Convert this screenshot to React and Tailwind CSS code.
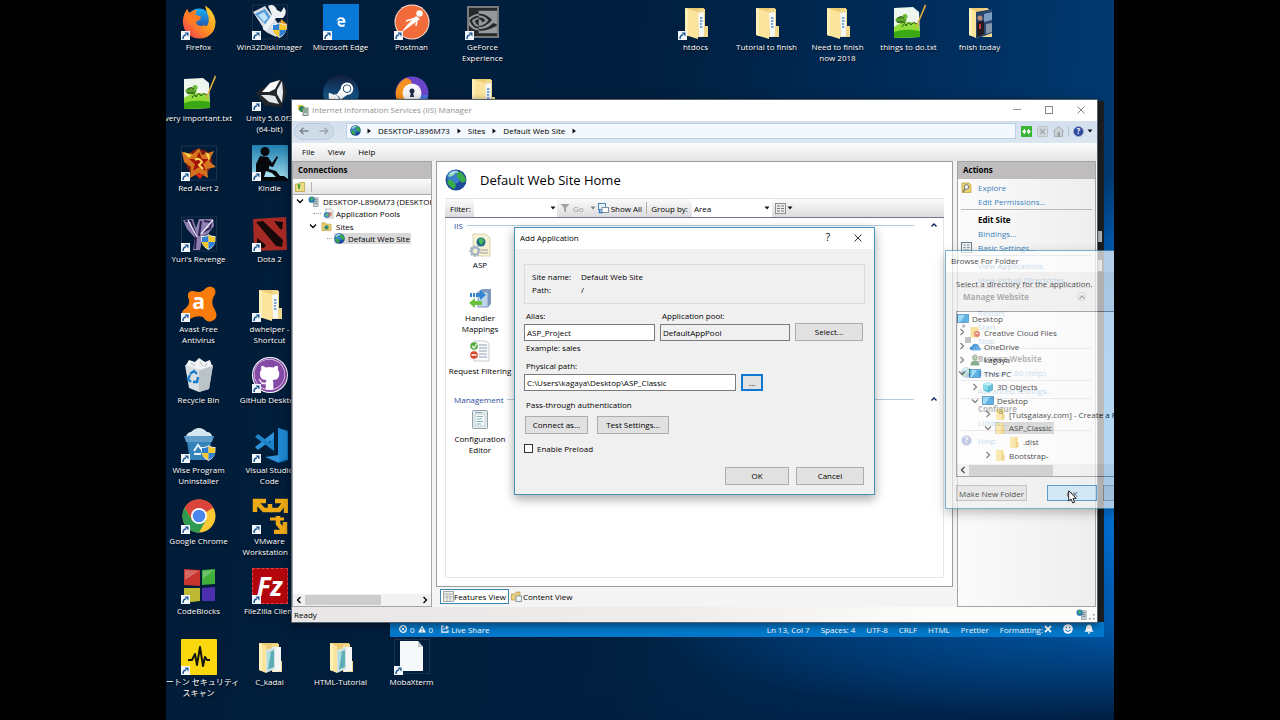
import React from "react";
import { FaGithub, FaSteamSymbol } from "react-icons/fa";
import { FaEdgeLegacy } from "react-icons/fa6";
import { SiNvidia } from "react-icons/si";

/* ---------- desktop icons (36 x 36) ---------- */

function Svg({ children, box = "0 0 36 36", className = "size-9" }) {
  return (
    <svg viewBox={box} className={className} aria-hidden="true">
      {children}
    </svg>
  );
}

const Shield = () => (
  <g>
    <path d="M20 20 q6 0 7.500 -2 q2 2 7 2 q1 10 -7 14 q-8 -4 -7.500 -14z" fill="#e8eef5" />
    <path d="M21 21 q5 0 6.500 -2 v7 h-6.500z" fill="#2f7fd4" />
    <path d="M27.500 19 q2 2 6.500 2 v5 h-6.500z" fill="#f6c72d" />
    <path d="M21 26 h6.500 v7 q-6 -3 -6.500 -7z" fill="#f6c72d" />
    <path d="M27.500 26 h6.500 q-.5 4 -6.500 7z" fill="#2f7fd4" />
  </g>
);

const Firefox = () => (
  <Svg>
    <defs>
      <linearGradient id="ffBody" x1="1" y1="0" x2="0" y2="1">
        <stop offset="0" stopColor="#ffe23c" />
        <stop offset=".45" stopColor="#ff9a1c" />
        <stop offset="1" stopColor="#ee2f55" />
      </linearGradient>
      <linearGradient id="ffGlobe" x1="0" y1="0" x2="0" y2="1">
        <stop offset="0" stopColor="#18b0f2" />
        <stop offset="1" stopColor="#2c3f9e" />
      </linearGradient>
    </defs>
    <circle cx="18" cy="16" r="11.500" fill="url(#ffGlobe)" />
    <path
      d="M24 1.500 Q33 7 34.500 17 Q35 28 26 33 Q16 37 8 31 Q1 25 2 15 Q3 9 6 5 Q7 8 9 9 Q12 6 16 6 Q14 9 14.500 11 L20 13 Q19 16 15 17.500 Q15 21 19 22 Q23 21 26 22 Q29 18 27 11 Q25 6 24 1.500z"
      fill="url(#ffBody)"
    />
    <path d="M6 5 Q7 8 9 9 Q12 6 16 6 Q14 9 14.500 11 L20 13 Q19 16 15 17.500 Q12 17 10 20 Q3 16 6 5z" fill="#ff7a22" />
  </Svg>
);

const DiskImager = () => (
  <Svg>
    <rect x=".5" y="1" width="35" height="34" fill="none" stroke="#1c3350" />
    <path d="M1 8 L13 2 L28 22 L24 33 L14 28z" fill="#d7dde2" />
    <path d="M3 10 L13 5 L21 17 L16 23z" fill="#4f9ada" />
    <path d="M6 11 L12 8 L16 14 L12 18z" fill="#bfe0fa" />
    <path d="M16 2 Q22 -1 25 6 L29 8 L32 3 Q36 9 31 14 L24 14 L14 27 Q10 26 11 23 L20 11z" fill="#eef2f4" />
    <path d="M29 15 L35 20 V26 L28 20z" fill="#e59a2c" />
    <Shield />
  </Svg>
);

const Edge = () => (
  <div className="flex size-9 items-center justify-center bg-[#0a78d7] text-[10px] text-white">
    <FaEdgeLegacy />
  </div>
);

const Postman = () => (
  <Svg>
    <circle cx="18" cy="18" r="17.500" fill="#f7e2d6" />
    <circle cx="18" cy="18" r="16.500" fill="#f26b3a" />
    <circle cx="25.500" cy="9.500" r="3.200" fill="#fff" />
    <path d="M22 12 L26 15 L15 23 L7 29 L13 21z" fill="#fff" />
    <path d="M22 14 L12 17 M23 15 L22 22" stroke="#fff" strokeWidth="1.600" fill="none" />
  </Svg>
);

const GeForce = () => (
  <div className="flex size-9 items-center justify-center">
    <div className="flex size-8 items-center justify-center overflow-hidden border-2 border-[#77797b] bg-[#26282b] text-[34px] text-[#96999b]">
      <SiNvidia className="shrink-0" />
    </div>
  </div>
);

const NotePad = () => (
  <Svg>
    <path d="M3 4 L22 3 L28 8 L29 33 L3 34z" fill="#eef6ee" />
    <path d="M3 23 Q14 15 28 20 L29 33 L3 34z" fill="#8fdc3a" />
    <path d="M3 28 Q14 24 29 27 L29 33 L3 34z" fill="#3aa812" />
    <ellipse cx="10" cy="16" rx="5.500" ry="3.500" fill="#5ba32c" />
    <circle cx="14" cy="12.500" r="2.500" fill="#6cbb35" />
    <path d="M7 14 q3 -3 6 0 M6 18 h8 M11 23 q3 -6 4 -1 q3 -6 5 -1 q2 -4 6 -1" stroke="#24501a" fill="none" />
    <path d="M34 0 L35 2 L26 23 L24 25 L25 22z" fill="#e2b03c" />
  </Svg>
);

const Unity = () => (
  <Svg>
    <path d="M9 14 L27 4 L31 6 L35 18 L29 32 L12 30 L4 18z" fill="#22262b" />
    <path d="M10 17 L18 8 L28 5 L23 14 L17 17z" fill="#fff" />
    <path d="M30 6 L31 17 L30 28 L25 19 L25 15z" fill="#e9ecee" />
    <path d="M9 20 L17 20 L23 21 L27 29 L17 27z" fill="#e3e6e8" />
  </Svg>
);

const Steam = () => (
  <div className="size-9 rounded-full bg-[linear-gradient(180deg,#111d3a,#1478b8)] p-1 text-[28px] text-white">
    <FaSteamSymbol />
  </div>
);

const Privacy = () => (
  <Svg>
    <circle cx="18" cy="18" r="16.500" fill="#6a45c9" />
    <path d="M2 22 Q0 10 12 3 Q22 6 14 14 L18 34 Q5 34 2 22z" fill="#f58f1e" />
    <path d="M34 20 Q34 32 18 34 V20z" fill="#4c78e0" />
    <circle cx="18" cy="18" r="9.500" fill="#f4f4fa" />
    <circle cx="18" cy="16" r="2.500" fill="#20304a" />
    <path d="M17 17 h2 l1 5 h-4z" fill="#20304a" />
  </Svg>
);

const Folder = ({ kind }) => (
  <Svg>
    <path d="M7 4 H26 V31 H7z" fill="#edcb74" />
    <path d="M20 5 H27 V22 H30 V33 H20z" fill="#f1d88f" />
    {kind === "pictures" ? (
      <g>
        <path d="M20 8 L29 8 V32 L21 33z" fill="#f5f5f3" />
        <path d="M14 11 L23 8 V30 L14 34z" fill="#d3e2e2" />
        <path d="M15 14 L22 11 V28 L15 31z" fill="#5cadb5" />
        <path d="M15 14 L19 12 L16 31 L15 31z" fill="#b0dde0" />
      </g>
    ) : kind === "photo" ? (
      <g>
        <path d="M14 8 L30 5 V29 L14 35z" fill="#29456c" />
        <path d="M22 10 L30 8 V16 L22 18z" fill="#7d9cc4" />
        <path d="M24 20 L30 19 V28 L24 30z" fill="#8796ab" />
        <circle cx="18" cy="14" r="2.500" fill="#b98d76" />
        <path d="M15 18 L22 17 L22 30 L15 33z" fill="#251a20" />
        <path d="M17 20 h2 v5 h-2z" fill="#c03a34" />
      </g>
    ) : (
      <g>
        <path d="M20 9 L26 8 V32 L21 33z" fill="#f7f7f5" />
        <path d="M22 14 h2.500 M22 17 h2.500 M22 20 h2 M22 23 h2.500" stroke="#4d8fd0" strokeWidth="1.600" />
      </g>
    )}
    <path d={kind ? "M7 4 L14 7 V34 L7 31z" : "M7 4 L20 8 V35 L7 31z"} fill="#fbe49c" />
    <path d="M7 4 L10 5 V32 L7 31z" fill="#fff0b8" />
  </Svg>
);

const RedAlert = () => (
  <Svg>
    <rect x=".5" y="1" width="35" height="34" fill="none" stroke="#1c3350" />
    <circle cx="18" cy="17" r="13" fill="#7c1a12" />
    <path d="M1 7 L12 9 L18 3 L21 10 L33 6 L28 16 L35 22 L26 24 L27 33 L18 28 L9 33 L10 22 L3 17z" fill="#d5731e" />
    <path d="M18 7 L21 14 L28 14 L22 19 L25 26 L18 22 L12 26 L14 19 L8 14 L15 14z" fill="#a31108" />
    <path d="M2 7 L11 10 L8 13z M24 7 q7 2 4 9" fill="#f6d24a" />
    <path d="M14 15 q4 -3 7 2 l-3 3 l4 4" stroke="#ffd95a" strokeWidth="2" fill="none" />
    <path d="M14 29 h9 l-4 5z" fill="#e52616" />
  </Svg>
);

const Kindle = () => (
  <Svg>
    <defs>
      <linearGradient id="kindleSky" x1="0" y1="0" x2="0" y2="1">
        <stop offset="0" stopColor="#1f7fb0" />
        <stop offset="1" stopColor="#a6e0f0" />
      </linearGradient>
    </defs>
    <rect width="36" height="36" rx="1" fill="url(#kindleSky)" />
    <circle cx="13" cy="6.500" r="4.500" fill="#05080c" />
    <path d="M8 11 L16 12 L20 18 L25 11 L26 12 L21 22 L17 21 L17 24 L24 26 L28 31 H32 L36 34 V36 H1 L4 33 H7 L4 27 L4 19z" fill="#05080c" />
    <path d="M14 26 L20 28 L24 32 H12z" fill="#a6e0f0" />
  </Svg>
);

const Yuri = () => (
  <Svg>
    <rect x=".5" y="1" width="35" height="34" fill="none" stroke="#1c3350" />
    <path d="M2 4 L12 3 L15 12 L18 3 H32 L33 10 L27 18 L22 20 L19 34 H12 L14 22 L6 13z" fill="#8d80b0" />
    <path d="M4 5 L10 5 L15 20 L14 33 M20 5 L18 20 M23 5 L30 6 L29 12 L22 16" stroke="#2d2152" strokeWidth="2" fill="none" />
    <path d="M7 4 L16 21 M32 4 L20 18" stroke="#ece8f7" strokeWidth="1.300" fill="none" />
    <Shield />
  </Svg>
);

const Dota = () => (
  <Svg>
    <path d="M1 3 L34 1 L35 34 L2 35z" fill="#a82a25" />
    <path d="M4 6 L11 5 L31 24 L30 31 L24 30z M22 5 L31 6 L30 14 L27 12z M5 22 L14 29 L12 32 L5 31z" fill="#17090a" />
  </Svg>
);

const Avast = () => (
  <div className="relative size-9">
    <Svg>
      <path d="M25 2 Q29 -1 33 2 Q36 6 33 10 Q29 17 34 24 Q38 32 31 35 Q26 37 22 31 Q15 29 9 33 Q3 35 1 29 Q0 25 5 22 Q10 18 7 11 Q6 4 13 5 Q20 8 25 2z" fill="#f97b0c" />
    </Svg>
    <span className="absolute inset-0 text-center text-[21px] leading-[30px] font-bold text-white">a</span>
  </div>
);

const RecycleBin = () => (
  <Svg>
    <path d="M4 8 L32 8 L28 32 L18 35 L8 31z" fill="#d9dfe2" />
    <path d="M18 11 L32 8 L28 32 L18 35z" fill="#b9c3c8" />
    <path d="M5 8 L8 3 L14 5 L18 1 L24 5 L29 3 L31 9 L19 13z" fill="#f2f4f5" />
    <path d="M10 6 l4 3 M19 5 l3 4 M26 6 l-2 4" stroke="#aab4ba" />
    <path d="M9 17 l4 -3 l3 3 M17 20 l-1 5 l-4 0 M10 25 l-3 -3 l2 -4" stroke="#1a7cc8" strokeWidth="2.400" fill="none" />
  </Svg>
);

const GitHubIcon = () => (
  <div className="flex size-9 items-center justify-center rounded-full bg-white p-px">
    <div className="flex size-full items-center justify-center rounded-full bg-[#8549a6]">
      <div className="rounded-full bg-white text-[31px] text-[#8549a6]">
        <FaGithub />
      </div>
    </div>
  </div>
);

const Wise = () => (
  <Svg>
    <path d="M3 9 H33 L31 15 H5z" fill="#5f9cc9" />
    <path d="M5 9 Q7 5 10 5 Q18 -3 26 5 Q30 5 31 9z" fill="#d7e7f2" />
    <path d="M6 15 H30 L28 33 H9z" fill="#3583b8" />
    <path d="M13 24 l4 -6 l4 5 M20 27 h-7" stroke="#e8f3fa" strokeWidth="2" fill="none" />
    <Shield />
  </Svg>
);

const VsCode = () => (
  <Svg>
    <path d="M26 1 L36 4 V33 L26 36z" fill="#1173bd" />
    <path d="M26 1 L35 4 V31 L26 35z" fill="#1f86cf" />
    <path d="M22 5 V23 L18 20 V12z" fill="#1d84cc" />
    <path d="M22 5 L3 20 L6 23 L22 11z" fill="#2e93da" />
    <path d="M3 10 L6 7 L22 19 V24z" fill="#1d84cc" />
    <path d="M13 30 L27 28 V36z" fill="#2e93da" />
  </Svg>
);

const Chrome = () => (
  <Svg>
    <circle cx="18" cy="18" r="16.500" fill="#fcc934" />
    <path d="M18 18 L3.700 9.800 A16.500 16.500 0 0 1 32.300 9.800z" fill="#d9453a" />
    <path d="M18 10 H32.500 L32.300 9.800 A16.500 16.500 0 0 0 3.700 9.800 L11 22z" fill="#d9453a" />
    <path d="M3.700 9.800 A16.500 16.500 0 0 0 18 34.500 L25 22 L18 26 L11 22z" fill="#2f9b50" />
    <circle cx="18" cy="18" r="8" fill="#fff" />
    <circle cx="18" cy="18" r="6.300" fill="#4a86ee" />
  </Svg>
);

const Vmware = () => (
  <Svg>
    <g fill="none" stroke="#edaa15" strokeWidth="4.500">
      <path d="M3 14 V3 H14 M4 4 L12 12 H18 V6" />
      <path d="M23 3 H34 V15 M33 4 L27 12 H19" />
      <path d="M33 24 V34 H22 M33 34 L26 26 V18" />
      <path d="M18 21 H32" strokeWidth="3" />
    </g>
  </Svg>
);

const CodeBlocks = () => (
  <Svg>
    <path d="M3 1 L19 2 V18 L3 17z" fill="#c8342f" />
    <path d="M21 2 L34 1 V16 L21 17z" fill="#3fae3a" />
    <path d="M3 20 L19 20 V33 L3 35z" fill="#bdb933" />
    <path d="M21 20 L34 19 V33 L21 33z" fill="#4b2fae" />
    <path d="M4 2 L18 3 L4 12z M22 3 L33 2 L22 11z" fill="#fff" opacity=".25" />
  </Svg>
);

const FileZilla = () => (
  <div className="flex size-9 items-center justify-center border border-dashed border-[#d9474a] bg-[#b3060c] text-[26px] leading-none font-bold text-white italic">
    Fz
  </div>
);

const Norton = () => (
  <Svg>
    <rect width="36" height="36" rx="1" fill="#fbd80d" />
    <path d="M7 21 L11 21 L14 15 L16 26 L19 8 L22 27 L24 18 L26 21 H29" stroke="#15160f" strokeWidth="2" fill="none" strokeLinejoin="round" />
  </Svg>
);

const BlankFile = () => (
  <Svg>
    <rect x=".5" y=".5" width="35" height="34" fill="none" stroke="#1c3350" />
    <path d="M6 2 H24 L29 8 V32 H6z" fill="#f6f8f9" />
    <path d="M24 2 V8 H29z" fill="#c3ccd2" />
  </Svg>
);

const ShortcutArrow = () => (
  <svg viewBox="0 0 9 9" className="absolute bottom-0 left-0 size-[9px]" aria-hidden="true">
    <rect width="9" height="9" fill="#f4f7fa" />
    <path d="M2 8 Q2 4 5 4" stroke="#1c5794" strokeWidth="1.500" fill="none" />
    <path d="M3.500 1.500 H7.500 V5.500z" fill="#1c5794" />
  </svg>
);

const desktopItems = [
  { at: "col-start-1 row-start-1", label: "Firefox", icon: <Firefox />, link: true },
  { at: "col-start-2 row-start-1", label: "Win32DiskImager", icon: <DiskImager />, link: true },
  { at: "col-start-3 row-start-1", label: "Microsoft Edge", icon: <Edge />, link: true },
  { at: "col-start-4 row-start-1", label: "Postman", icon: <Postman />, link: true },
  { at: "col-start-5 row-start-1", label: "GeForce\nExperience", icon: <GeForce />, link: true },
  { at: "col-start-8 row-start-1", label: "htdocs", icon: <Folder />, link: true },
  { at: "col-start-9 row-start-1", label: "Tutorial to finish", icon: <Folder /> },
  { at: "col-start-10 row-start-1", label: "Need to finish\nnow 2018", icon: <Folder /> },
  { at: "col-start-11 row-start-1", label: "things to do.txt", icon: <NotePad /> },
  { at: "col-start-12 row-start-1", label: "fnish today", icon: <Folder kind="photo" /> },
  { at: "col-start-1 row-start-2", label: "very important.txt", icon: <NotePad /> },
  { at: "col-start-2 row-start-2", label: "Unity 5.6.0f3\n(64-bit)", icon: <Unity />, link: true },
  { at: "col-start-3 row-start-2", label: "", icon: <Steam /> },
  { at: "col-start-4 row-start-2", label: "", icon: <Privacy /> },
  { at: "col-start-5 row-start-2", label: "", icon: <Folder /> },
  { at: "col-start-1 row-start-3", label: "Red Alert 2", icon: <RedAlert />, link: true },
  { at: "col-start-2 row-start-3", label: "Kindle", icon: <Kindle />, link: true },
  { at: "col-start-1 row-start-4", label: "Yuri's Revenge", icon: <Yuri />, link: true },
  { at: "col-start-2 row-start-4", label: "Dota 2", icon: <Dota />, link: true },
  { at: "col-start-1 row-start-5", label: "Avast Free\nAntivirus", icon: <Avast />, link: true },
  { at: "col-start-2 row-start-5", label: "dwhelper -\nShortcut", icon: <Folder />, link: true },
  { at: "col-start-1 row-start-6", label: "Recycle Bin", icon: <RecycleBin /> },
  { at: "col-start-2 row-start-6", label: "GitHub Desktop", icon: <GitHubIcon />, link: true },
  { at: "col-start-1 row-start-7", label: "Wise Program\nUninstaller", icon: <Wise />, link: true },
  { at: "col-start-2 row-start-7", label: "Visual Studio\nCode", icon: <VsCode />, link: true },
  { at: "col-start-1 row-start-8", label: "Google Chrome", icon: <Chrome />, link: true },
  { at: "col-start-2 row-start-8", label: "VMware\nWorkstation ...", icon: <Vmware />, link: true },
  { at: "col-start-1 row-start-9", label: "CodeBlocks", icon: <CodeBlocks />, link: true },
  { at: "col-start-2 row-start-9", label: "FileZilla Client", icon: <FileZilla />, link: true },
  { at: "col-start-1 row-start-10", label: "ノートン セキュリティ\nスキャン", icon: <Norton />, link: true },
  { at: "col-start-2 row-start-10", label: "C_kadai", icon: <Folder kind="pictures" /> },
  { at: "col-start-3 row-start-10", label: "HTML-Tutorial", icon: <Folder kind="pictures" /> },
  { at: "col-start-4 row-start-10", label: "MobaXterm", icon: <BlankFile />, link: true },
];

function DesktopIcons() {
  return (
    <ul className="-ml-[3px] grid h-[709px] grid-cols-[repeat(13,71px)] grid-rows-10 pt-1">
      {desktopItems.map((item) => (
        <li key={item.at} className={"flex flex-col items-center gap-px " + item.at}>
          <span className="relative">
            {item.icon}
            {item.link && <ShortcutArrow />}
          </span>
          <span className="text-center leading-[11px] whitespace-pre text-white [text-shadow:0_1px_2px_#000]">
            {item.label}
          </span>
        </li>
      ))}
    </ul>
  );
}

/* ---------- small icons ---------- */

const Globe = ({ className = "size-[11px]" }) => (
  <Svg box="0 0 22 22" className={className}>
    <circle cx="11" cy="11" r="10.500" fill="#1c4b9c" />
    <circle cx="9" cy="8" r="7" fill="#4a96de" opacity=".7" />
    <path d="M2 13 Q3 10 6 11 L10 14 L11 17 L9 20 Q4 18 2 13z M12 3 L16 3 L20 8 L21 12 L17 14 L14 10 L12 8z" fill="#37ab45" />
    <path d="M3 7 Q6 2 11 3 L9 6 L5 8z" fill="#8fd8b5" />
    <path d="M5 5 Q8 2 13 3" stroke="#dff2ff" strokeWidth="1.500" fill="none" opacity=".8" />
  </Svg>
);

const ServerIcon = () => (
  <Svg box="0 0 12 12" className="size-[11px] shrink-0">
    <rect x="6" y="2" width="5" height="9.500" fill="#c9d2d6" stroke="#7f8c92" strokeWidth=".7" />
    <path d="M7 4 h3 M7 6 h3 M7 8 h3" stroke="#54636a" strokeWidth=".8" />
    <circle cx="4" cy="4" r="3.400" fill="#2b77bd" />
    <path d="M2 3 l2 -2 l2 2 l-2 3z" fill="#47b359" />
  </Svg>
);

const ManagerIcon = () => (
  <Svg box="0 0 12 12" className="size-3 shrink-0">
    <path d="M1 1 h5 v5 h-5z" fill="#e4bd3f" />
    <circle cx="5" cy="5" r="3" fill="#2f8a57" />
    <rect x="6" y="4" width="5" height="7.500" fill="#cfd7cf" stroke="#5d6f66" strokeWidth=".8" />
    <path d="M7 6 h3 M7 8 h3" stroke="#3b7a52" />
  </Svg>
);

const PoolIcon = () => (
  <Svg box="0 0 12 12" className="size-[11px] shrink-0">
    <path d="M3 1 h6 l2 2 v8 h-8z" fill="#f3f4f5" stroke="#9aa4aa" strokeWidth=".7" />
    <circle cx="4" cy="7.500" r="3.200" fill="#3e8ec4" />
    <path d="M6 4 l4 1 l-1 4 l-3 1z" fill="#c2584e" opacity=".7" />
    <path d="M3 6 l2 0 l1 3 l-3 0z" fill="#64bf6b" />
  </Svg>
);

const SitesIcon = () => (
  <Svg box="0 0 12 12" className="size-[11px] shrink-0">
    <path d="M1 2 h4 l1 1.500 h5 v7 h-10z" fill="#e9cf6e" stroke="#b3953a" strokeWidth=".6" />
    <circle cx="6" cy="7" r="2.400" fill="#3a8a78" />
  </Svg>
);

const SmallFolder = () => (
  <Svg box="0 0 11 12" className="h-3 w-[11px] shrink-0">
    <path d="M1.500 1 h7 v10.500 h-7z" fill="#f3cf62" />
    <path d="M1.500 1 h5 v10.500 h-5z" fill="#fbe291" />
    <path d="M7 6 h2.500 v5.500 h-2.500z" fill="#eec65a" />
  </Svg>
);

const MonitorIcon = () => (
  <Svg box="0 0 12 11" className="h-[11px] w-3 shrink-0">
    <rect x=".5" y="1.500" width="11" height="8" fill="#2296dd" stroke="#1467a5" strokeWidth=".8" />
    <path d="M1 2 h7 l-5 7 h-2z" fill="#7fd0f8" />
  </Svg>
);

const CloudIcon = () => (
  <Svg box="0 0 12 11" className="h-[11px] w-3 shrink-0">
    <path d="M1 8.500 Q0 5.500 3 5 Q4 2 7 3 Q10 3 10 6 Q12 6.500 11.500 9 H2z" fill="#1374c9" />
    <path d="M3 9.500 Q3 6.500 6 6.500 Q8 4.500 10 6.500 Q12 7 11.500 9.500z" fill="#3a9be8" />
  </Svg>
);

const CcIcon = () => (
  <Svg box="0 0 12 12" className="size-3 shrink-0">
    <path d="M1.500 1 h8 v10.500 h-8z" fill="#f6d876" />
    <circle cx="8" cy="8" r="3" fill="#dd5139" />
    <path d="M6.500 8 q1.500 -2 3 0" stroke="#fff" fill="none" />
  </Svg>
);

const UserIcon = () => (
  <Svg box="0 0 12 12" className="size-3 shrink-0">
    <circle cx="6" cy="3.500" r="2.600" fill="#9bbf9a" stroke="#587558" strokeWidth=".6" />
    <path d="M1.500 11.500 q0 -5 4.500 -5 q4.500 0 4.500 5z" fill="#5e8f64" />
  </Svg>
);

const CubeIcon = () => (
  <Svg box="0 0 12 12" className="size-3 shrink-0">
    <path d="M1 3 l5 -2 l5 2 v6 l-5 2.500 l-5 -2.500z" fill="#2aa5c4" />
    <path d="M1 3 l5 2 v6.500 l-5 -2.500z" fill="#5ed0e6" />
    <path d="M1 3 l5 -2 l5 2 l-5 2z" fill="#a6ecf6" />
  </Svg>
);

const chevronPaths = {
  down: "M1 2.500 L4 5.500 L7 2.500",
  up: "M1.500 5.500 L4 3 L6.500 5.500",
  left: "M5.500 1 L2.500 4 L5.500 7",
  right: "M2.500 1 L5.500 4 L2.500 7",
};

const Chevron = ({ dir = "down", className = "" }) => (
  <Svg box="0 0 8 8" className={"size-2 shrink-0 " + className}>
    <path d={chevronPaths[dir]} fill="none" stroke="currentColor" strokeWidth="1.300" />
  </Svg>
);

const Triangle = ({ right }) => (
  <Svg box="0 0 6 6" className="size-[6px] shrink-0">
    <path d={right ? "M1.500 0.500 L5 3 L1.500 5.500z" : "M0.500 1.500 H5.500 L3 4.500z"} fill="#111" />
  </Svg>
);

const Cross = ({ className }) => (
  <Svg box="0 0 8 8" className={"size-2 " + className}>
    <path d="M.5 .5 L7.500 7.500 M7.500 .5 L.5 7.500" stroke="currentColor" strokeWidth=".9" />
  </Svg>
);

const HelpIcon = () => (
  <span className="flex size-[11px] shrink-0 items-center justify-center rounded-full border border-[#9fa9cf] bg-[#2a48a0] text-[8px] leading-none font-bold text-white">
    ?
  </span>
);

/* ---------- editor behind the main window ---------- */

function EditorWindow() {
  return (
    <section
      aria-label="Code editor"
      className="absolute top-[101px] left-[224px] flex h-[536px] w-[714px] flex-col bg-[#1e2023]"
    >
      <div className="flex flex-1 flex-col items-end gap-[18px] pt-[130px] pr-0.5">
        <span className="h-[11px] w-1 bg-[#c4c8cc]" />
        <span className="h-[11px] w-1 bg-[#c4c8cc]" />
      </div>
      <footer className="flex h-[15px] items-center justify-between bg-[#0479cb] pr-[10px] pb-px pl-[9px] text-white">
        <div className="flex items-center gap-2">
          <span className="flex items-center gap-[3px]">
            <Svg box="0 0 8 8" className="size-2">
              <circle cx="4" cy="4" r="3.300" fill="none" stroke="#fff" strokeWidth="1.200" />
              <path d="M2.500 2.500 L5.500 5.500 M5.500 2.500 L2.500 5.500" stroke="#fff" />
            </Svg>
            0
            <Svg box="0 0 8 8" className="size-2">
              <path d="M4 .5 L8 7.500 H0z" fill="#fff" />
              <path d="M4 3 V5 M4 5.800 V6.800" stroke="#0479cb" />
            </Svg>
            0
          </span>
          <span className="flex items-center gap-0.5">
            <Svg box="0 0 8 8" className="size-2">
              <path d="M3 1 H.8 V7.200 H7 V5" fill="none" stroke="#fff" strokeWidth="1.200" />
              <path d="M2.500 5 Q3 2.500 5.500 2.500" fill="none" stroke="#fff" />
              <path d="M5 .3 L8 2.500 L5 4.700z" fill="#fff" />
            </Svg>
            Live Share
          </span>
        </div>
        <div className="flex items-center gap-[11px]">
          <span>Ln 13, Col 7</span>
          <span>Spaces: 4</span>
          <span>UTF-8</span>
          <span>CRLF</span>
          <span>HTML</span>
          <span>Prettier</span>
          <span className="flex items-center gap-px">
            Formatting:
            <Svg box="0 0 8 8" className="size-2">
              <path d="M1 1 L7 7 M7 1 L1 7" stroke="#fff" strokeWidth="1.800" />
            </Svg>
          </span>
          <Svg box="0 0 10 10" className="size-[10px]">
            <circle cx="5" cy="5" r="4.800" fill="#fff" />
            <path d="M3.300 2.800 v1.500 M6.700 2.800 v1.500 M2.300 6 Q5 9 7.700 6" stroke="#0479cb" fill="none" />
          </Svg>
          <Svg box="0 0 10 10" className="size-[10px]">
            <path d="M5 .5 Q8 1 8 4.500 Q8 6.500 9.500 7.800 H.5 Q2 6.500 2 4.500 Q2 1 5 .5z M4 8.300 h2 v1.200 h-2z" fill="#fff" />
          </Svg>
        </div>
      </footer>
    </section>
  );
}

/* ---------- IIS Manager ---------- */

function TitleBar() {
  return (
    <header className="flex h-[21px] items-center justify-between bg-white pr-3 pb-0.5 pl-[5px] text-[#8f8f8f]">
      <h1 className="flex items-center gap-[3px]">
        <ManagerIcon />
        Internet Information Services (IIS) Manager
      </h1>
      <div className="flex items-center gap-6">
        <button type="button" aria-label="Minimize" className="flex size-2 items-center">
          <span className="h-px w-full bg-[#999]" />
        </button>
        <button type="button" aria-label="Maximize" className="size-2 border border-[#888]" />
        <button type="button" aria-label="Close">
          <Cross className="text-[#777]" />
        </button>
      </div>
    </header>
  );
}

function AddressBar() {
  return (
    <nav aria-label="Address" className="flex h-[22px] items-center gap-[5px] bg-[linear-gradient(180deg,#d3dfed,#dbe6f1)] pr-1 pb-0.5 pl-0.5">
      <div className="flex h-[17px] w-10 items-center justify-between rounded-full border border-[#bccbdb] bg-[#cfdbe8] px-1 text-[#78828e]">
        {["Back", "Forward"].map((name) => (
          <button key={name} type="button" aria-label={name}>
            <Svg box="0 0 10 8" className={"h-2 w-[10px] " + (name === "Forward" ? "rotate-180 opacity-60" : "")}>
              <path d="M4.500 .7 L1.200 4 L4.500 7.300 M1.200 4 H9.500" stroke="currentColor" strokeWidth="1.400" fill="none" />
            </Svg>
          </button>
        ))}
      </div>
      <ol className="ml-[7px] flex h-4 flex-1 items-center gap-[6px] border border-[#bcd0e4] bg-[#f2f8fd] px-[3px] pb-px">
        <li className="-mr-px">
          <Globe />
        </li>
        {["DESKTOP-L896M73", "Sites", "Default Web Site"].map((part) => (
          <li key={part} className="flex items-center gap-[6px]">
            <Triangle right />
            <a href="#">{part}</a>
          </li>
        ))}
        <li>
          <Triangle right />
        </li>
      </ol>
      <div className="flex items-center gap-[5px]">
        <button type="button" aria-label="Refresh">
          <Svg box="0 0 11 11" className="size-[11px]">
            <rect width="11" height="11" rx="1" fill="#38b532" />
            <path d="M1 5.500 L4 2.500 V4.500 H7 V2.500 L10 5.500 L7 8.500 V6.500 H4 V8.500z" fill="#fff" />
            <path d="M5.500 3.500 v4" stroke="#38b532" />
          </Svg>
        </button>
        <button type="button" aria-label="Stop">
          <Svg box="0 0 11 11" className="size-[11px]">
            <rect x=".5" y=".5" width="10" height="10" rx="1" fill="#d3d8dc" stroke="#bcc3c9" />
            <path d="M3 3 L8 8 M8 3 L3 8" stroke="#a2a9af" strokeWidth="1.400" />
          </Svg>
        </button>
        <button type="button" aria-label="Home">
          <Svg box="0 0 11 11" className="size-[11px]">
            <path d="M.5 5 L5.500 .5 L10.500 5 H9.500 V10.500 H1.500 V5z" fill="#cfd3d6" stroke="#9ba2a8" strokeWidth=".8" />
            <rect x="4.500" y="6" width="2.500" height="4.500" fill="#989fa5" />
          </Svg>
        </button>
        <span className="-mx-px h-[10px] w-px bg-[#b3c2d1]" />
        <button type="button" aria-label="Help" className="flex items-center gap-[3px]">
          <HelpIcon />
          <Triangle />
        </button>
      </div>
    </nav>
  );
}

const paneHead = "flex h-[17px] shrink-0 items-center bg-[#bebcbd] px-[5px] pb-0.5 font-bold";

function Connections() {
  return (
    <aside className="flex w-[140px] flex-col overflow-hidden border border-[#a5a5a5] bg-white">
      <h2 className={paneHead}>Connections</h2>
      <div className="flex h-[16px] shrink-0 items-center gap-[6px] border-b border-[#a9a9a9] bg-[linear-gradient(180deg,#fbfbfb,#e2e2e2)] px-0.5">
        <button type="button" aria-label="Connect">
          <Svg box="0 0 10 11" className="h-[11px] w-[10px]">
            <path d="M.5 3 H4 L5 1.500 H9.500 V10.500 H.5z" fill="#eedd80" stroke="#b9a44a" strokeWidth=".8" />
            <path d="M3 8 V5 H2 L4 2.500 L6 5 H5 V8z" fill="#4ea63b" />
          </Svg>
        </button>
        <span className="h-[10px] w-px bg-[#b5b5b5]" />
      </div>
      <ul className="grid h-[50px] auto-rows-fr whitespace-nowrap">
        <li className="flex items-center gap-1 pl-[3px]">
          <Chevron />
          <ServerIcon />
          DESKTOP-L896M73 (DESKTOP
        </li>
        <li className="flex items-center gap-0.5 pl-5">
          <span className="w-2 border-t border-dotted border-[#999]" />
          <PoolIcon />
          Application Pools
        </li>
        <li className="flex items-center gap-1 pl-4">
          <Chevron />
          <SitesIcon />
          Sites
        </li>
        <li className="flex items-center gap-0.5 pl-[34px]">
          <span className="w-[5px] border-t border-dotted border-[#999]" />
          <span className="flex items-center gap-[3px] bg-[#d9d9d9] pr-px">
            <Globe />
            Default Web Site
          </span>
        </li>
      </ul>
      <div className="mt-auto flex h-3 items-center justify-between bg-[#f1f1f1] px-0.5">
        <Chevron dir="left" />
        <span className="mr-auto ml-0.5 h-[10px] w-[76px] bg-[#cdcdcd]" />
        <Chevron dir="right" />
      </div>
    </aside>
  );
}

const AspIcon = () => (
  <Svg box="0 0 24 24" className="size-6">
    <path d="M5 1 H18 L22 5 V23 H5z" fill="#f6f1d4" stroke="#d2cba5" strokeWidth=".8" />
    <circle cx="13" cy="9" r="4.500" fill="#1e6e86" />
    <path d="M10 7 l4 -2 l2 3 l-3 4z" fill="#4cb85c" />
    <path d="M13 17 H20 M13 20 H20" stroke="#9a9a8c" />
    <circle cx="7" cy="18" r="3.500" fill="none" stroke="#9fb1c4" strokeWidth="2" />
    <circle cx="7" cy="18" r="5" fill="none" stroke="#9fb1c4" strokeWidth="1.500" strokeDasharray="2 1.500" />
  </Svg>
);

const HandlerIcon = () => (
  <Svg box="0 0 24 24" className="size-6">
    <path d="M11 5 L14 3 H23 V18 L20 21 H11z" fill="#7f9cc0" />
    <rect x="10" y="6" width="10" height="15" fill="#bed4ea" stroke="#6c8db3" strokeWidth=".8" />
    <path d="M2 7 h2 v4 h-2z M5 7 h2 v4 h-2z M8 7 H12 V4 L18 9 L12 14 V11 H8z" fill="#2f85d0" />
    <path d="M14 15 H7 V12 L1 17 L7 22 V19 H14z" fill="#6cc43e" />
  </Svg>
);

const FilterIcon = () => (
  <Svg box="0 0 24 24" className="size-6">
    <path d="M6 2 H18 L21 5 V22 H6z" fill="#fafafa" stroke="#b9c0c6" strokeWidth=".8" />
    <path d="M11 6 H19 M11 9 H19 M11 12 H19 M11 15 H19 M11 18 H19" stroke="#90a4bb" />
    <circle cx="6" cy="7" r="3.800" fill="#52ab3f" />
    <path d="M4 7 L6 9 L8.500 5" stroke="#fff" strokeWidth="1.200" fill="none" />
    <circle cx="6" cy="16" r="3.800" fill="#d8472c" />
    <path d="M3.500 16 H8.500" stroke="#fff" strokeWidth="1.500" />
  </Svg>
);

const ConfigIcon = () => (
  <Svg box="0 0 24 24" className="size-6">
    <rect x="4.500" y="3.500" width="15" height="18" rx="1" fill="#e7ecef" stroke="#93a1aa" />
    <rect x="7" y="7" width="10" height="12" fill="#f7fbfc" stroke="#b4c2c9" strokeWidth=".7" />
    <path d="M7 5.500 H14 M8.500 9.500 H15 M8.500 12 H14 M8.500 14.500 H15 M8.500 17 H13" stroke="#86b1b7" />
  </Svg>
);

function FeatureGroup({ title, items }) {
  return (
    <section>
      <h3 className="flex h-[14px] items-center gap-1 pr-[5px] pl-2 text-[#2b4a96]">
        {title}
        <span className="mr-3 h-px flex-1 bg-[#b4cbdc]" />
        <Chevron dir="up" className="text-[#0c1d5c]" />
      </h3>
      <ul className="grid auto-rows-[53px] grid-cols-[68px] pt-px">
        {items.map(([label, icon]) => (
          <li key={label} className="flex flex-col items-center gap-0.5 text-center leading-[11px] whitespace-pre">
            {icon}
            {label}
          </li>
        ))}
      </ul>
    </section>
  );
}

function Center() {
  return (
    <main className="flex flex-1 flex-col">
      <div className="flex flex-1 flex-col border border-[#9d9d9d] bg-white px-2 pb-2">
        <h2 className="flex h-9 items-center gap-[13px] text-[13px]">
          <Globe className="size-[22px]" />
          Default Web Site Home
        </h2>
        <div className="flex h-5 items-center border-t border-b border-t-[#e3e3e3] border-b-[#74748a] bg-[linear-gradient(180deg,#fbfbfb,#dcdcde)]">
          <label htmlFor="filter" className="w-[29px] pl-[5px]">
            Filter:
          </label>
          <span className="flex h-full w-[83px] items-center bg-white pr-px">
            <input id="filter" className="w-full bg-transparent outline-none" />
            <Triangle />
          </span>
          <button type="button" className="flex items-center gap-[3px] pl-[3px] text-[#9b9b9b]">
            <Svg box="0 0 10 10" className="size-[10px]">
              <path d="M.5 1 H9.500 L6 5 V9.500 L4 8 V5z" fill="#a3a3a3" />
            </Svg>
            Go
            <span className="ml-[3px] opacity-50">
              <Triangle />
            </span>
          </button>
          <button type="button" className="flex items-center gap-0.5 pl-0.5">
            <Svg box="0 0 11 11" className="size-[11px]">
              <rect x=".5" y=".5" width="7" height="6" fill="#e7f1fa" stroke="#4d87b8" />
              <rect x="4" y="4.500" width="6.500" height="5" fill="#fff" stroke="#7f8f9c" />
              <path d="M1.500 6 v3.500 h3" stroke="#2c79c4" strokeWidth="1.500" fill="none" />
            </Svg>
            Show All
          </button>
          <span className="mx-1 h-3 w-px bg-[#b8ab9d]" />
          <label htmlFor="group">Group by:</label>
          <span className="ml-1 flex h-full w-[80px] items-center bg-white pr-0.5 pl-0.5">
            <select id="group" className="w-full appearance-none bg-transparent outline-none">
              <option>Area</option>
            </select>
            <Triangle />
          </span>
          <button type="button" aria-label="View" className="flex items-center gap-px pl-[3px]">
            <Svg box="0 0 11 11" className="size-[11px]">
              <rect x=".5" y=".5" width="10" height="10" fill="#eceded" stroke="#8f8f8f" />
              <path d="M2 3 h3 M6 3 h3 M2 5.500 h3 M6 5.500 h3 M2 8 h3 M6 8 h3" stroke="#777" strokeWidth="1.200" />
            </Svg>
            <Triangle />
          </button>
        </div>
        <div className="flex-1 border border-t-0 border-[#e4e7ea]">
          <FeatureGroup
            title="IIS"
            items={[
              ["ASP", <AspIcon />],
              ["Handler\nMappings", <HandlerIcon />],
              ["Request Filtering", <FilterIcon />],
            ]}
          />
          <FeatureGroup title="Management" items={[["Configuration\nEditor", <ConfigIcon />]]} />
        </div>
      </div>
      <div className="flex h-[20px] items-center gap-0.5 pb-0.5 pl-1">
        <button type="button" className="flex h-[15px] items-center border border-[#3d87b3] bg-white px-0.5">
          <Svg box="0 0 11 11" className="size-[11px]">
            <rect x=".5" y=".5" width="10" height="10" fill="#eee" stroke="#a8a8a8" />
            <path d="M1 3 h9 M4 3 v7 M7 3 v7 M1 6 h9" stroke="#b4b4b4" />
          </Svg>
          Features View
        </button>
        <button type="button" className="flex h-[15px] items-center gap-px">
          <Svg box="0 0 11 11" className="size-[11px]">
            <path d="M.5 3 H4 L5 1 H9 V9 H.5z" fill="#e9cf7a" stroke="#b4984a" strokeWidth=".7" />
            <rect x="5" y="5" width="5.500" height="5.500" fill="#eef3f8" stroke="#6f86a0" strokeWidth=".8" />
          </Svg>
          Content View
        </button>
      </div>
    </main>
  );
}

function ActionRow({ icon, children }) {
  return (
    <li className="flex h-[14px] items-center gap-[6px] pl-[3px]">
      <span className="flex w-[11px] shrink-0">{icon}</span>
      {children}
    </li>
  );
}

const A = ({ children }) => (
  <a href="#" className="text-[#3e83bb]">
    {children}
  </a>
);
const Rule = () => <li className="mx-[3px] mt-px mb-0.5 h-px bg-[#b9b9b9]" />;

function Actions() {
  return (
    <aside className="flex w-[139px] flex-col overflow-hidden border border-[#a5a5a5] bg-[linear-gradient(90deg,#fbfbfb,#eeeeee)]">
      <h2 className={paneHead}>Actions</h2>
      <ul className="flex flex-col pt-px whitespace-nowrap">
        <ActionRow
          icon={
            <Svg box="0 0 11 11" className="size-[11px]">
              <path d="M1 1 H8 L10 3 V10.500 H1z" fill="#ecd56c" stroke="#b59c3c" strokeWidth=".7" />
              <circle cx="5.500" cy="5" r="2.300" fill="#f4f7fa" stroke="#667" strokeWidth=".9" />
              <path d="M4 7 L2 10" stroke="#667" strokeWidth="1.300" />
            </Svg>
          }
        >
          <A>Explore</A>
        </ActionRow>
        <ActionRow>
          <A>Edit Permissions...</A>
        </ActionRow>
        <Rule />
        <ActionRow>
          <b>Edit Site</b>
        </ActionRow>
        <ActionRow>
          <A>Bindings...</A>
        </ActionRow>
        <ActionRow
          icon={
            <Svg box="0 0 11 11" className="size-[11px]">
              <rect x=".5" y=".5" width="10" height="10" fill="#edf1f4" stroke="#6f7f8f" />
              <path d="M2.500 3 h2 M6 3 h2.500 M2.500 5.500 h2 M6 5.500 h2.500 M2.500 8 h6" stroke="#8493a1" />
            </Svg>
          }
        >
          <A>Basic Settings...</A>
        </ActionRow>
        <Rule />
        <ActionRow>
          <A>View Applications</A>
        </ActionRow>
        <ActionRow>
          <A>View Virtual Directories</A>
        </ActionRow>
        <Rule />
        <li className="mb-0.5 flex h-[13px] items-center justify-between pr-[9px] pl-[5px] font-bold">
          Manage Website
          <span className="flex size-[9px] items-center justify-center rounded-full border border-[#999]">
            <Chevron dir="up" />
          </span>
        </li>
        <ActionRow>
          <A>Restart</A>
        </ActionRow>
        <ActionRow icon={<Triangle right />}>
          <A>Start</A>
        </ActionRow>
        <ActionRow icon={<span className="ml-1 size-[6px] bg-[#333]" />}>
          <A>Stop</A>
        </ActionRow>
        <Rule />
        <ActionRow>
          <b>Browse Website</b>
        </ActionRow>
        <ActionRow icon={<Globe />}>
          <A>Browse *:80 (http)</A>
        </ActionRow>
        <Rule />
        <ActionRow>
          <A>Advanced Settings...</A>
        </ActionRow>
        <Rule />
        <ActionRow>
          <b>Configure</b>
        </ActionRow>
        <ActionRow>
          <A>Limits...</A>
        </ActionRow>
        <Rule />
        <ActionRow icon={<HelpIcon />}>
          <A>Help</A>
        </ActionRow>
      </ul>
    </aside>
  );
}

function ManagerWindow() {
  return (
    <section
      aria-label="Internet Information Services (IIS) Manager"
      className="absolute top-[99px] left-[125px] flex h-[524px] w-[807px] flex-col border border-[#55606c] bg-[#f4f4f4] shadow-[0_2px_8px_rgba(0,0,0,0.5)]"
    >
      <TitleBar />
      <AddressBar />
      <div role="menubar" className="flex h-[18px] items-center gap-[13px] bg-[linear-gradient(180deg,#fdfdfd,#e5e4e4)] pb-0.5 pl-[10px]">
        {["File", "View", "Help"].map((m) => (
          <button key={m} type="button" role="menuitem">
            {m}
          </button>
        ))}
      </div>
      <div className="flex flex-1 gap-1 pr-px">
        <Connections />
        <Center />
        <Actions />
      </div>
      <footer className="flex h-[15px] items-center justify-between bg-[linear-gradient(90deg,#e8e6e6,#f0eeec_50%,#fcfcfb_80%)] px-0.5">
        Ready
        <span className="flex items-end gap-0.5">
          <ServerIcon />
          <Svg box="0 0 6 6" className="size-[6px]">
            <path d="M4 0 h1.500 v1.500 h-1.500z M4 4 h1.500 v1.500 h-1.500z M0 4 h1.500 v1.500 h-1.500z" fill="#888" />
          </Svg>
        </span>
      </footer>
    </section>
  );
}

/* ---------- dialogs ---------- */

const button = "h-[18px] border border-[#adadad] bg-[#e1e1e1] pb-0.5 text-center";
const field = "h-[17px] border border-[#7a7a7a] px-0.5 pb-px outline-none";
const caption = "pb-[3px] pl-0.5 leading-[10px]";

function AddApplication() {
  return (
    <form
      role="dialog"
      aria-label="Add Application"
      className="absolute top-[227px] left-[348px] w-[361px] border border-[#4593b8] bg-[#f0f0f0] shadow-[0_4px_10px_rgba(0,0,0,0.35)]"
    >
      <header className="flex h-[21px] items-center bg-white pr-3 pb-0.5 pl-[5px]">
        <h2 className="flex-1">Add Application</h2>
        <button type="button" aria-label="Help" className="mr-6 text-[10px]">
          ?
        </button>
        <button type="button" aria-label="Close">
          <Cross className="text-[#222]" />
        </button>
      </header>
      <div className="flex flex-col px-[9px] pt-[15px] pb-[9px]">
        <dl className="grid h-10 grid-cols-[49px_1fr] content-center border border-[#dcdcdc] px-[7px] pb-0.5 leading-[13px]">
          <dt>Site name:</dt>
          <dd>Default Web Site</dd>
          <dt>Path:</dt>
          <dd>/</dd>
        </dl>
        <div className="mt-[7px] flex items-end gap-[5px]">
          <div className="flex w-[131px] flex-col">
            <label htmlFor="alias" className={caption}>
              Alias:
            </label>
            <input id="alias" defaultValue="ASP_Project" className={field + " bg-white"} />
          </div>
          <div className="flex w-[130px] flex-col">
            <label htmlFor="pool" className={caption}>
              Application pool:
            </label>
            <input id="pool" readOnly defaultValue="DefaultAppPool" className={field + " bg-[#f0f0f0]"} />
          </div>
          <button type="button" className={button + " w-[68px]"}>
            Select...
          </button>
        </div>
        <p className={"mt-0.5 " + caption}>Example: sales</p>
        <label htmlFor="path" className={"mt-[5px] " + caption}>
          Physical path:
        </label>
        <div className="flex gap-[5px]">
          <input id="path" defaultValue="C:\Users\kagaya\Desktop\ASP_Classic" className={field + " w-[212px] bg-white"} />
          <button type="button" aria-label="Browse" className="h-[17px] w-[22px] border-2 border-[#0f78d4] bg-[#e1e1e1] leading-[11px]">
            ...
          </button>
        </div>
        <p className={"mt-[9px] " + caption}>Pass-through authentication</p>
        <div className="mt-[3px] flex gap-[9px] pl-px">
          <button type="button" className={button + " w-[63px]"}>
            Connect as...
          </button>
          <button type="button" className={button + " w-[72px]"}>
            Test Settings...
          </button>
        </div>
        <label className="mt-2 flex h-[13px] items-center gap-1">
          <input type="checkbox" className="size-[9px] appearance-none border border-[#333] bg-white" />
          Enable Preload
        </label>
        <div className="mt-3 flex justify-end gap-[7px] pr-px">
          <button type="button" className={button + " w-16"}>
            OK
          </button>
          <button type="button" className={button + " w-[68px]"}>
            Cancel
          </button>
        </div>
      </div>
    </form>
  );
}

const folderRows = [
  { pad: "pl-0", icon: <MonitorIcon />, label: "Desktop" },
  { pad: "pl-px", icon: <CcIcon />, label: "Creative Cloud Files", arrow: "right" },
  { pad: "pl-px", icon: <CloudIcon />, label: "OneDrive", arrow: "right" },
  { pad: "pl-px", icon: <UserIcon />, label: "kagaya", arrow: "right" },
  { pad: "pl-px", icon: <MonitorIcon />, label: "This PC", arrow: "down" },
  { pad: "pl-[14px]", icon: <CubeIcon />, label: "3D Objects", arrow: "right" },
  { pad: "pl-[14px]", icon: <MonitorIcon />, label: "Desktop", arrow: "down" },
  { pad: "pl-[27px]", icon: <SmallFolder />, label: "[Tutsgalaxy.com] - Create a Real", arrow: "right" },
  { pad: "pl-[27px]", icon: <SmallFolder />, label: "ASP_Classic", arrow: "down", selected: true },
  { pad: "pl-[52px]", icon: <SmallFolder />, label: ".dist" },
  { pad: "pl-[27px]", icon: <SmallFolder />, label: "Bootstrap-", arrow: "right" },
];

function BrowseForFolder() {
  return (
    <section
      role="dialog"
      aria-label="Browse For Folder"
      className="absolute top-[250px] left-[779px] w-[228px] border border-[#4593b8] bg-[#f0f0f0] opacity-70 shadow-[0_4px_10px_rgba(0,0,0,0.35)]"
    >
      <h2 className="flex h-[21px] items-center bg-white pb-0.5 pl-[5px]">Browse For Folder</h2>
      <div className="pt-[5px] pb-[7px] pl-[10px]">
        <p className="leading-[13px]">Select a directory for the application.</p>
        <div className="mt-[21px] border border-r-0 border-[#828790] bg-white">
          <ul className="grid h-[152px] auto-rows-fr pb-0.5 whitespace-nowrap">
            {folderRows.map((row, i) => (
              <li key={i} className={"flex items-center gap-[3px] " + row.pad}>
                {row.arrow && <Chevron dir={row.arrow} className="text-[#555]" />}
                <span className={"flex items-center gap-[3px] " + (row.selected ? "bg-[#d0d0d0] pr-0.5" : "")}>
                  {row.icon}
                  {row.label}
                </span>
              </li>
            ))}
          </ul>
          <div className="flex h-3 items-center bg-[#f0f0f0] pl-0.5">
            <Chevron dir="left" />
            <span className="ml-0.5 h-[11px] w-[84px] bg-[#c4c4c4]" />
          </div>
        </div>
        <div className="mt-2 flex">
          <button type="button" className="h-4 w-[71px] border border-[#adadad] bg-[#e1e1e1]">
            Make New Folder
          </button>
          <button type="button" className="ml-5 h-4 w-[50px] border border-[#1c7cc4] bg-[#c9e4f8]">
            OK
          </button>
          <button type="button" className="ml-[6px] h-4 w-[50px] border border-[#adadad] bg-[#e1e1e1]">
            Cancel
          </button>
        </div>
      </div>
    </section>
  );
}

const Cursor = () => (
  <svg viewBox="0 0 9 14" className="absolute top-[490px] left-[902px] h-[14px] w-[9px]" aria-hidden="true">
    <path d="M.7 .8 V11 L3 9 L4.800 13 L6.600 12.200 L5 8.400 H8.200z" fill="#fff" stroke="#111" strokeWidth=".9" />
  </svg>
);

export default function App() {
  return (
    <div className="h-screen bg-black">
      <div className="relative mx-auto aspect-[79/60] h-full overflow-hidden bg-[radial-gradient(ellipse_20%_34%_at_103%_58%,#0a80e4,#0068c8_55%,transparent),radial-gradient(ellipse_50%_14%_at_100%_86%,#00529f,transparent),linear-gradient(170deg,transparent_86%,#001d40_100%),linear-gradient(95deg,#001c38,#002040_50%,#002e5e_78%,#003d76)] font-['Open_Sans','Noto_Sans_CJK_JP',sans-serif] text-[8px] leading-[11px] text-black">
        <DesktopIcons />
        <EditorWindow />
        <ManagerWindow />
        <AddApplication />
        <BrowseForFolder />
        <Cursor />
      </div>
    </div>
  );
}
